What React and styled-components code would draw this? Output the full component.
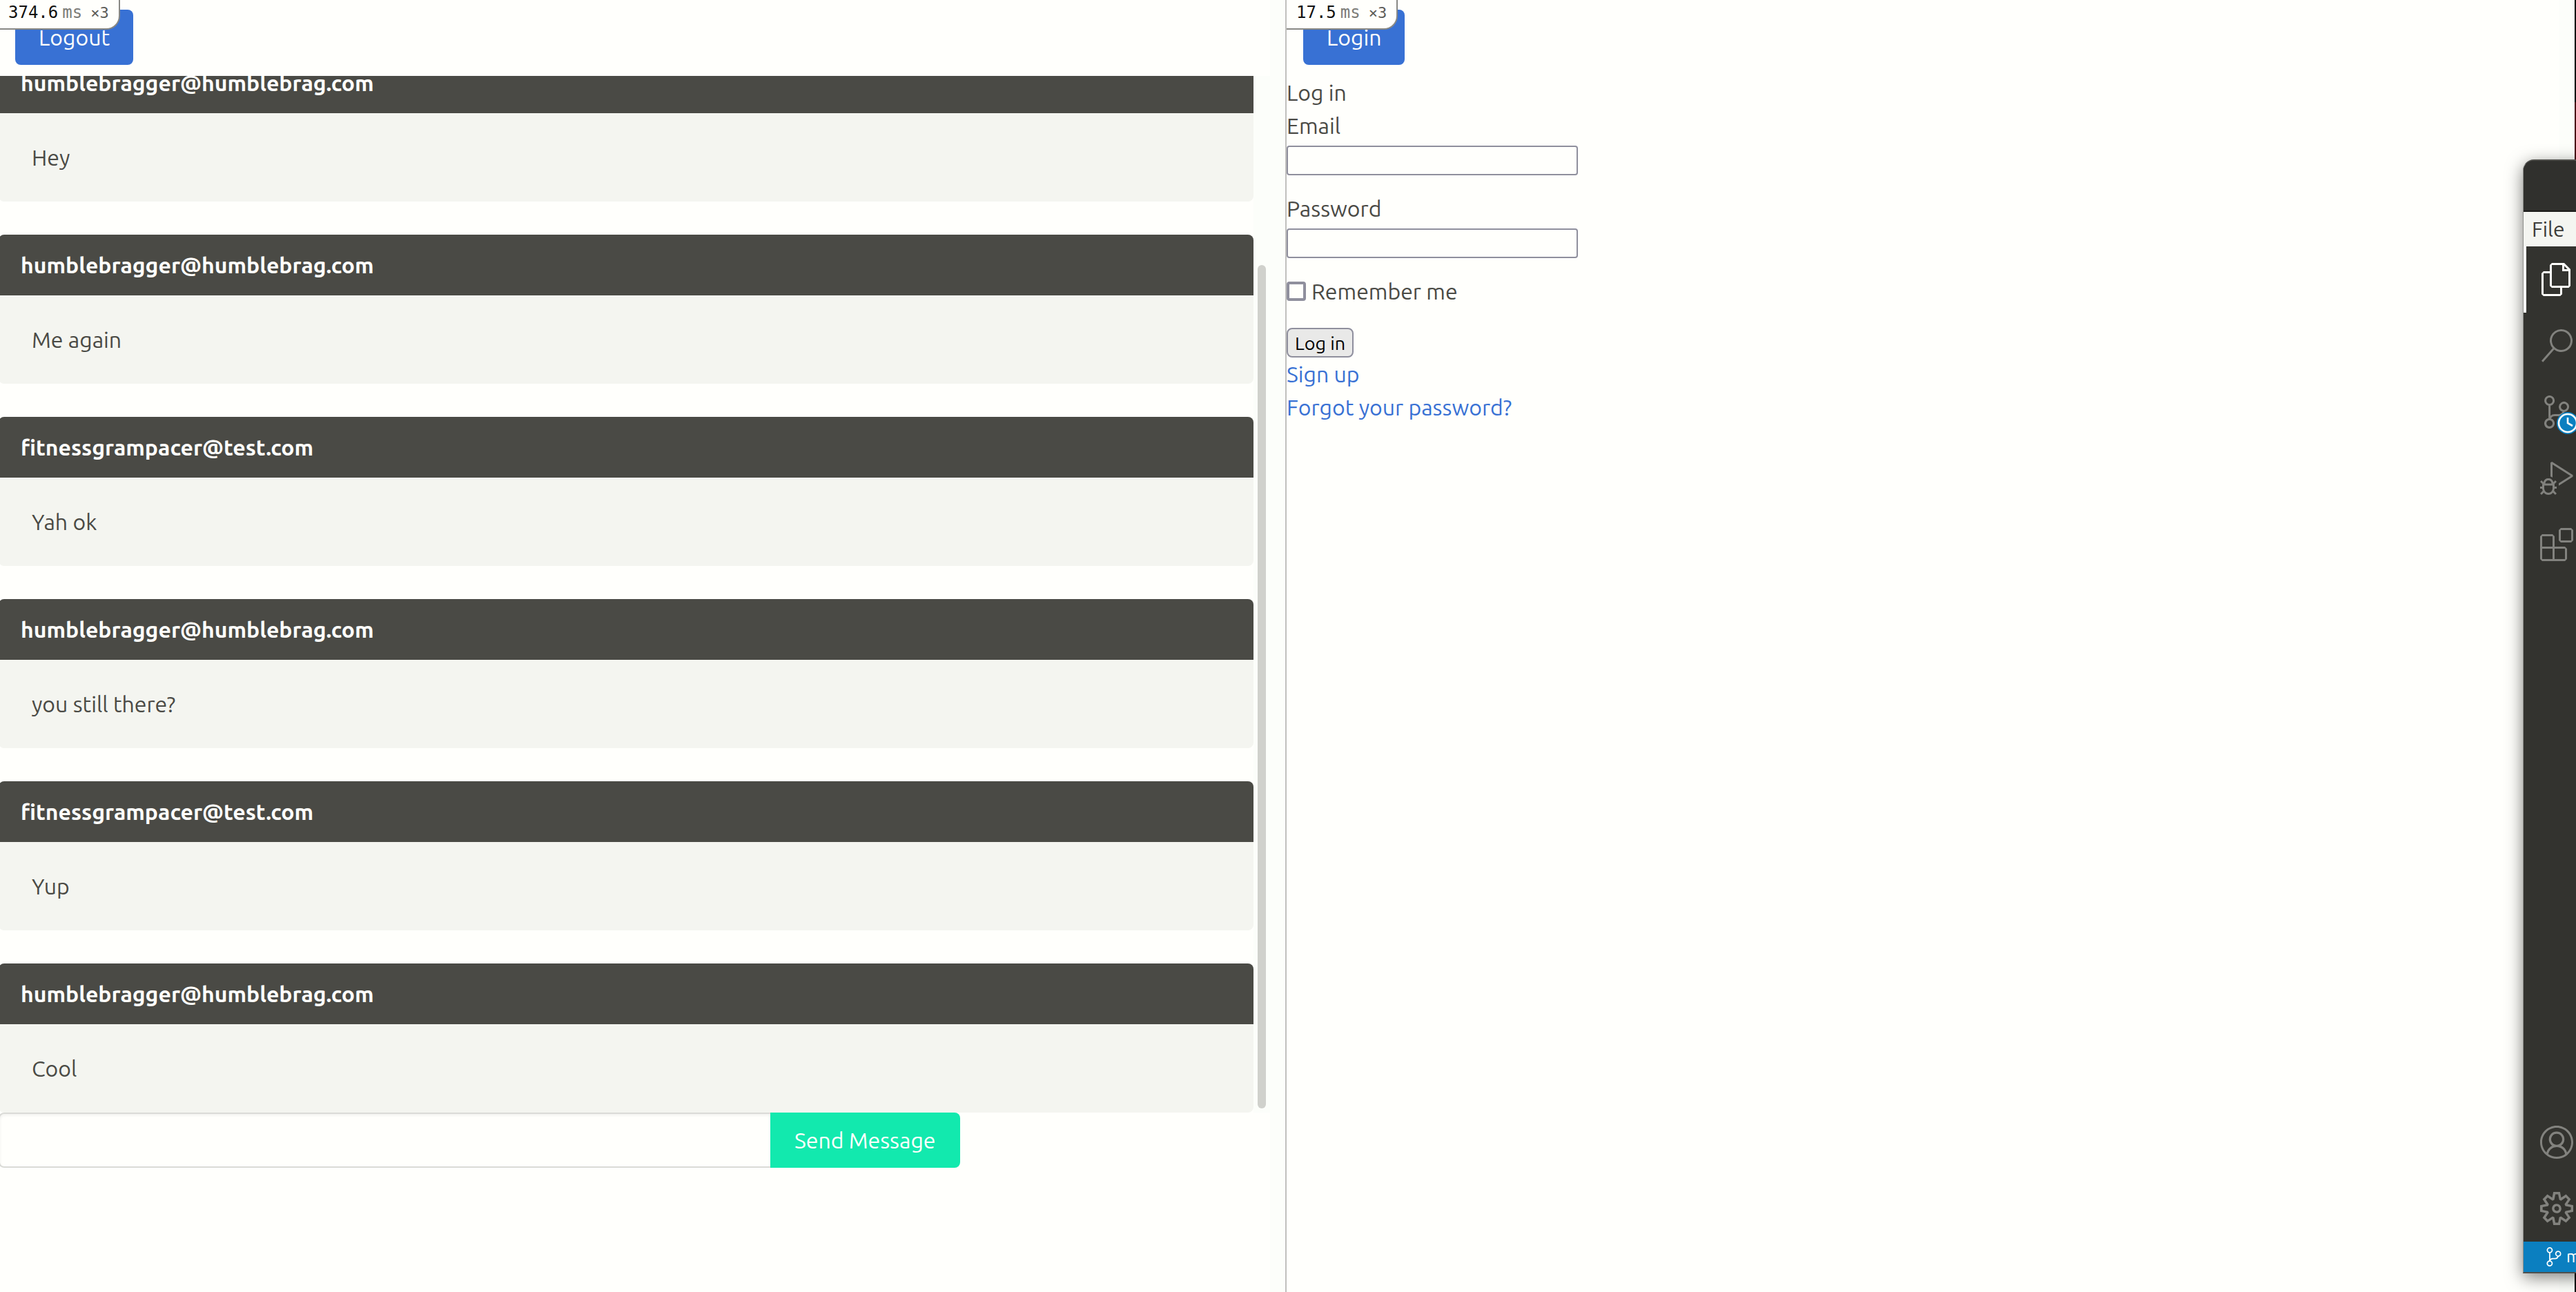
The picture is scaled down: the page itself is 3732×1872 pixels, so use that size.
import React from "react";
import styled, { createGlobalStyle } from "styled-components";
import {
  VscFiles,
  VscSearch,
  VscSourceControl,
  VscDebugAlt,
  VscExtensions,
  VscAccount,
  VscSettingsGear,
} from "react-icons/vsc";

const sans = `Ubuntu, "Noto Sans", "Open Sans", sans-serif`;
const mono = `"DejaVu Sans Mono", "Liberation Mono", monospace`;

const GlobalStyle = createGlobalStyle`
  *, *::before, *::after { box-sizing: border-box; }
  body {
    margin: 0;
    background: #fffffc;
    color: #4a4a45;
    font: 400 32px/48px ${sans};
  }
  button, input { font: inherit; margin: 0; }
  a { color: #3871d4; text-decoration: none; }
`;

const Desktop = styled.div`
  position: relative;
  display: flex;
  height: 100vh;
  overflow: hidden;
`;

const ScreenEdge = styled.div`
  flex: 0 0 2px;
  background: linear-gradient(#000 148px, #4a1018 148px, #4a1018 240px, #000 240px);
`;

const ChatWindow = styled.main`
  position: relative;
  display: flex;
  flex: 0 0 50%;
  margin-left: -2px;
  border-right: 2px solid #c0c0bd;
`;

const ChatPage = styled.div`
  display: flex;
  flex-direction: column;
  flex: 1;
  min-width: 0;
`;

const PageGutter = styled.div`
  flex: 0 0 22px;
  background: #fcfefa;
`;

const LoginWindow = styled.main`
  position: relative;
  display: flex;
  flex: 1;
  min-width: 0;
`;

const LoginPage = styled.div`
  flex: 1;
  min-width: 0;
`;

const NavBar = styled.nav`
  flex: none;
  padding: 14px 24px 16px;
  display: flex;
`;

const NavButton = styled.button`
  height: 80px;
  padding: 0 34px;
  border: 0;
  border-radius: 8px;
  background: #3871d4;
  color: #fffffc;
`;

const Profiler = styled.aside`
  position: absolute;
  top: 0;
  left: 0;
  display: flex;
  align-items: baseline;
  gap: 6px;
  height: 43px;
  padding: 0 14px;
  border: solid #888884;
  border-width: 0 2px 2px 0;
  border-bottom-right-radius: 20px;
  background: #fffffc;
  color: #11110f;
  font: 400 24px/36px ${mono};
`;

const Unit = styled.span`
  color: #7c7c78;
`;

const Count = styled.span`
  margin-left: 6px;
  color: #5c5c58;
  font-size: 22px;
`;

const Scroller = styled.div`
  display: flex;
  flex: 1;
  min-height: 0;
`;

const Messages = styled.div`
  display: flex;
  flex-direction: column;
  justify-content: flex-end;
  gap: 48px;
  flex: 1;
  min-width: 0;
  overflow: hidden;
`;

const Track = styled.div`
  display: flex;
  flex-direction: column;
  justify-content: flex-end;
  flex: 0 0 24px;
  padding: 6px;
  background: #fcfefa;
`;

const Thumb = styled.div`
  height: 82%;
  border-radius: 6px;
  background: #d0d1cc;
`;

const Card = styled.article`
  flex: none;
  border-radius: 8px;
  overflow: hidden;
  background: #f4f5f0;
`;

const Sender = styled.header`
  padding: 20px 32px;
  background: #4a4a45;
  color: #fffffc;
  font-weight: 700;
`;

const Body = styled.p`
  margin: 0;
  padding: 40px 48px;
`;

const Composer = styled.form`
  display: flex;
  flex: 0 0 260px;
  align-items: flex-start;
`;

const MessageInput = styled.input`
  width: 1118px;
  height: 80px;
  padding: 0 20px;
  border: 2px solid #dadbd7;
  border-right: 0;
  border-radius: 8px 0 0 8px;
  background: #fffffc;
  box-shadow: inset 0 2px 4px rgba(10, 10, 10, 0.06);
`;

const SendButton = styled.button`
  height: 80px;
  padding: 0 35px;
  border: 0;
  border-radius: 0 8px 8px 0;
  background: #12e9ae;
  color: #fffffc;
`;

const LoginForm = styled.form`
  display: flex;
  flex-direction: column;
  gap: 24px;
`;

const Title = styled.h2`
  margin: 0;
  font: inherit;
`;

const Field = styled.div`
  display: flex;
  flex-direction: column;
  align-items: flex-start;
`;

const TextBox = styled.input`
  width: 422px;
  height: 43px;
  margin-top: 5px;
  padding: 0 6px;
  border: 2px solid #8f8f9d;
  border-radius: 4px;
  background: #fffffc;
`;

const CheckRow = styled.div`
  display: flex;
  align-items: center;
  gap: 8px;
`;

const CheckBox = styled.input`
  appearance: none;
  width: 28px;
  height: 28px;
  border: 4px solid #8f8f9d;
  border-radius: 4px;
  background: #fffffc;
`;

const SubmitButton = styled.button`
  height: 43px;
  margin-top: 5px;
  padding: 0 10px;
  border: 2px solid #8f8f9d;
  border-radius: 8px;
  background: #e9e9e8;
  color: #000;
  font-size: 27px;
  line-height: 36px;
`;

const Links = styled.div`
  display: flex;
  flex-direction: column;
  align-items: flex-start;
`;

const Editor = styled.section`
  position: absolute;
  top: 231px;
  left: calc(100% - 77px);
  width: 400px;
  height: 1614px;
  display: flex;
  flex-direction: column;
  border: 2px solid #50504c;
  border-left: 1px solid #8e8f8b;
  border-radius: 16px 0 0 0;
  overflow: hidden;
  background: #33332f;
  box-shadow: 0 6px 24px rgba(0, 0, 0, 0.5);
`;

const TitleBar = styled.div`
  flex: 0 0 74px;
  background: #30302d;
  border-bottom: 2px solid #1c1c1a;
`;

const MenuBar = styled.div`
  flex: 0 0 50px;
  display: flex;
  padding-left: 12px;
  background: #f4f5f1;
`;

const MenuButton = styled.button`
  padding: 0;
  border: 0;
  background: none;
  color: #3c3c38;
  font-size: 30px;
`;

const ActivityBar = styled.div`
  display: flex;
  flex-direction: column;
  flex: 1;
`;

const Spacer = styled.div`
  flex: 1;
`;

const Activity = styled.button`
  position: relative;
  display: flex;
  align-items: center;
  width: 96px;
  height: 96px;
  padding: 0 0 0 ${(p) => (p.$active ? 20 : 24)}px;
  border: solid #fffffc;
  border-width: 0 0 0 ${(p) => (p.$active ? 4 : 0)}px;
  background: none;
  color: ${(p) => (p.$active ? "#fffffc" : "#82827e")};
  font-size: 48px;
`;

const Pending = styled.svg`
  position: absolute;
  left: 48px;
  top: 48px;
  width: 32px;
  height: 32px;
`;

const StatusBar = styled.footer`
  display: flex;
  align-items: center;
  flex: 0 0 44px;
  gap: 4px;
  padding-left: 30px;
  background: #0b7fc0;
  color: #fffffc;
  font-size: 24px;
  line-height: 44px;

  svg { font-size: 28px; }
`;

const messages = [
  ["humblebragger@humblebrag.com", "Hey"],
  ["humblebragger@humblebrag.com", "Me again"],
  ["fitnessgrampacer@test.com", "Yah ok"],
  ["humblebragger@humblebrag.com", "you still there?"],
  ["fitnessgrampacer@test.com", "Yup"],
  ["humblebragger@humblebrag.com", "Cool"],
];

export default function App() {
  return (
    <>
      <GlobalStyle />
      <Desktop>
        <ChatWindow>
          <ChatPage>
            <NavBar>
              <NavButton type="button">Logout</NavButton>
            </NavBar>
            <Scroller>
              <Messages>
                {messages.map(([sender, text], i) => (
                  <Card key={i}>
                    <Sender>{sender}</Sender>
                    <Body>{text}</Body>
                  </Card>
                ))}
              </Messages>
              <Track>
                <Thumb />
              </Track>
            </Scroller>
            <Composer>
              <MessageInput type="text" aria-label="Message" />
              <SendButton type="button">Send Message</SendButton>
            </Composer>
          </ChatPage>
          <PageGutter />
          <Profiler>
            374.6<Unit>ms</Unit>
            <Count>×3</Count>
          </Profiler>
        </ChatWindow>
        <LoginWindow>
          <LoginPage>
            <NavBar>
              <NavButton type="button">Login</NavButton>
            </NavBar>
            <Title>Log in</Title>
            <LoginForm>
              <Field>
                <label htmlFor="email">Email</label>
                <TextBox id="email" type="email" />
              </Field>
              <Field>
                <label htmlFor="password">Password</label>
                <TextBox id="password" type="password" />
              </Field>
              <CheckRow>
                <CheckBox id="remember" type="checkbox" />
                <label htmlFor="remember">Remember me</label>
              </CheckRow>
              <Links>
                <SubmitButton type="button">Log in</SubmitButton>
                <a href="#signup">Sign up</a>
                <a href="#forgot">Forgot your password?</a>
              </Links>
            </LoginForm>
          </LoginPage>
          <PageGutter />
          <Profiler>
            17.5<Unit>ms</Unit>
            <Count>×3</Count>
          </Profiler>
        </LoginWindow>
        <ScreenEdge />
        <Editor>
          <TitleBar />
          <MenuBar>
            <MenuButton type="button">File</MenuButton>
          </MenuBar>
          <ActivityBar>
            <Activity type="button" aria-label="Explorer" $active>
              <VscFiles />
            </Activity>
            <Activity type="button" aria-label="Search">
              <VscSearch />
            </Activity>
            <Activity type="button" aria-label="Source control">
              <VscSourceControl />
              <Pending viewBox="0 0 32 32">
                <circle cx="16" cy="16" r="16" fill="#0b7fc0" />
                <circle cx="16" cy="16" r="13" fill="#0b7fc0" stroke="#fffffc" strokeWidth="2.6" />
                <path d="M16 8v8l7 4" fill="none" stroke="#fffffc" strokeWidth="2.6" />
              </Pending>
            </Activity>
            <Activity type="button" aria-label="Run and debug">
              <VscDebugAlt />
            </Activity>
            <Activity type="button" aria-label="Extensions">
              <VscExtensions />
            </Activity>
            <Spacer />
            <Activity type="button" aria-label="Account">
              <VscAccount />
            </Activity>
            <Activity type="button" aria-label="Settings">
              <VscSettingsGear />
            </Activity>
          </ActivityBar>
          <StatusBar>
            <VscSourceControl />
            <span>main</span>
          </StatusBar>
        </Editor>
      </Desktop>
    </>
  );
}
